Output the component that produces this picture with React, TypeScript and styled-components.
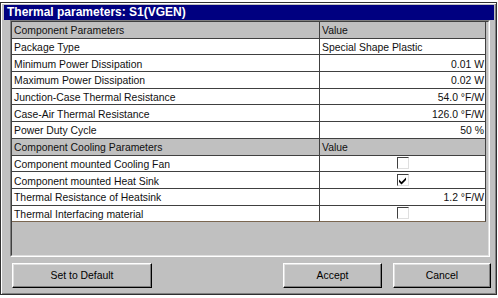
import React from "react";
import styled, { createGlobalStyle } from "styled-components";

const GlobalStyle = createGlobalStyle`
  html, body {
    margin: 0;
    padding: 0;
    background: #ffffff;
  }
  body {
    font-family: "Liberation Sans", Arial, sans-serif;
    font-size: 10.4px;
    color: #000;
  }
`;

type RowData =
  | { kind: "header"; label: string }
  | { kind: "text"; label: string; value: string; align?: "left" | "right" }
  | { kind: "check"; label: string; checked: boolean };

const rows: RowData[] = [
  { kind: "header", label: "Component Parameters" },
  { kind: "text", label: "Package Type", value: "Special Shape Plastic", align: "left" },
  { kind: "text", label: "Minimum Power Dissipation", value: "0.01 W" },
  { kind: "text", label: "Maximum Power Dissipation", value: "0.02 W" },
  { kind: "text", label: "Junction-Case Thermal Resistance", value: "54.0 °F/W" },
  { kind: "text", label: "Case-Air Thermal Resistance", value: "126.0 °F/W" },
  { kind: "text", label: "Power Duty Cycle", value: "50 %" },
  { kind: "header", label: "Component Cooling Parameters" },
  { kind: "check", label: "Component mounted Cooling Fan", checked: false },
  { kind: "check", label: "Component mounted Heat Sink", checked: true },
  { kind: "text", label: "Thermal Resistance of Heatsink", value: "1.2 °F/W" },
  { kind: "check", label: "Thermal Interfacing material", checked: false },
];

const ThermalDialog = () => {
  return (
    <Window>
      <TitleBar>Thermal parameters: S1(VGEN)</TitleBar>
      <Panel>
        <PanelInner>
          <Grid>
            {rows.map((row, i) => (
              <Row key={i} $header={row.kind === "header"} $last={i === rows.length - 1}>
                <LabelCell>{row.label}</LabelCell>
                {row.kind === "header" && <ValueCell $align="left">Value</ValueCell>}
                {row.kind === "text" && (
                  <ValueCell $align={row.align ?? "right"}>{row.value}</ValueCell>
                )}
                {row.kind === "check" && (
                  <ValueCell $align="center">
                    <CheckBox>
                      {row.checked && (
                        <svg width="9" height="9" viewBox="0 0 9 9">
                          <path d="M1 3.5 L3.5 6 L8 1.5 L8 4 L3.5 8.5 L1 6 Z" fill="#000" />
                        </svg>
                      )}
                    </CheckBox>
                  </ValueCell>
                )}
              </Row>
            ))}
          </Grid>
        </PanelInner>
      </Panel>
      <ButtonRow>
        <Button $width={140}>Set to Default</Button>
        <ButtonGroup>
          <Button $width={99}>Accept</Button>
          <Button $width={98}>Cancel</Button>
        </ButtonGroup>
      </ButtonRow>
    </Window>
  );
};

const Window = styled.div`
  box-sizing: border-box;
  margin-top: 2px;
  width: 497px;
  height: 293px;
  background: #c0c0c0;
  border: 1px solid #303030;
  box-shadow: inset 1px 1px #ffffff, inset -1px -1px #808080;
  padding: 2px 2px 0 3px;
  display: flex;
  flex-direction: column;
`;

const TitleBar = styled.div`
  height: 15px;
  background: #000080;
  color: #ffffff;
  font-weight: bold;
  font-size: 12px;
  line-height: 15px;
  padding-left: 3px;
  white-space: nowrap;
`;

const Panel = styled.div`
  box-sizing: border-box;
  margin: 0 4px 0 6px;
  height: 237px;
  border: 1px solid;
  border-color: #808080 #ffffff #ffffff #808080;
  display: flex;
`;

const PanelInner = styled.div`
  box-sizing: border-box;
  flex: 1;
  border: 1px solid;
  border-color: #404040 #dfdfdf #dfdfdf #404040;
`;

const Grid = styled.div`
  width: calc(100% - 2px);
  background: #ffffff;
`;

const Row = styled.div<{ $header?: boolean; $last?: boolean }>`
  box-sizing: border-box;
  display: grid;
  grid-template-columns: 308px 1fr;
  height: 16.7px;
  background: ${(p) => (p.$header ? "#c0c0c0" : "#ffffff")};
  border-bottom: 1px solid ${(p) => (p.$last ? "#7a6650" : "#404040")};
  border-right: 1px solid #404040;
`;

const LabelCell = styled.div`
  border-right: 1px solid #404040;
  padding: 2px 0 0 2px;
  display: flex;
  align-items: center;
  white-space: nowrap;
  overflow: hidden;
  color: #101010;
`;

const ValueCell = styled.div<{ $align: "left" | "right" | "center" }>`
  display: flex;
  align-items: center;
  justify-content: ${(p) =>
    p.$align === "left" ? "flex-start" : p.$align === "right" ? "flex-end" : "center"};
  padding: ${(p) => (p.$align === "center" ? "0" : "2px 1px 0 2px")};
  white-space: nowrap;
  color: #101010;
`;

const CheckBox = styled.div`
  box-sizing: border-box;
  width: 12px;
  height: 12px;
  background: #ffffff;
  border: 1px solid;
  border-color: #404040 #dfdfdf #dfdfdf #404040;
  display: flex;
  align-items: center;
  justify-content: center;
`;

const ButtonRow = styled.div`
  display: flex;
  justify-content: space-between;
  margin: 6px 3px 0 8px;
`;

const ButtonGroup = styled.div`
  display: flex;
  gap: 11px;
`;

const Button = styled.div<{ $width: number }>`
  box-sizing: border-box;
  width: ${(p) => p.$width}px;
  height: 25px;
  border: 1px solid;
  border-color: #ffffff #000000 #000000 #ffffff;
  box-shadow: inset -1px -1px #808080, inset 1px 1px #dfdfdf;
  display: flex;
  align-items: center;
  justify-content: center;
  background: #c0c0c0;
`;

export default function App() {
  return (
    <>
      <GlobalStyle />
      <ThermalDialog />
    </>
  );
}
